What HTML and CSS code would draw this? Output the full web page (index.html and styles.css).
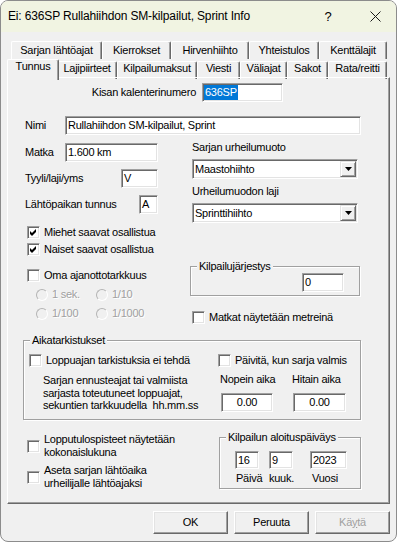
FILE: index.html
```html
<!DOCTYPE html>
<html>
<head>
<meta charset="utf-8">
<link rel="stylesheet" href="styles.css">
</head>
<body>
<div class="window">
  <div class="titlebar">
    <span class="title">Ei: 636SP Rullahiihdon SM-kilpailut, Sprint Info</span>
    <span class="help">?</span>
    <span class="close"><svg width="11" height="11" viewBox="0 0 11 11"><path d="M0.5 0.5L10.5 10.5M10.5 0.5L0.5 10.5" stroke="#1a1a1a" stroke-width="1"/></svg></span>
  </div>
  <div class="client">
    <div class="tabs">
      <div class="tabrow row1">
        <div class="tab">Sarjan lähtöajat</div>
        <div class="tab">Kierrokset</div>
        <div class="tab">Hirvenhiihto</div>
        <div class="tab">Yhteistulos</div>
        <div class="tab">Kenttälajit</div>
      </div>
      <div class="tabrow row2">
        <div class="tab sel">Tunnus</div>
        <div class="tab">Lajipiirteet</div>
        <div class="tab">Kilpailumaksut</div>
        <div class="tab">Viesti</div>
        <div class="tab">Väliajat</div>
        <div class="tab">Sakot</div>
        <div class="tab">Rata/reitti</div>
      </div>
    </div>

    <div class="panel">
      <div class="kisa">
        <span class="lbl">Kisan kalenterinumero</span>
        <span class="edit w81 hlbox"><span class="hl">636SP</span></span>
      </div>

      <div class="nimi">
        <span class="lbl">Nimi</span>
        <span class="edit w296">Rullahiihdon SM-kilpailut, Sprint</span>
      </div>

      <div class="mid">
        <div class="lcol">
          <div class="frow r-matka"><span>Matka</span><span class="edit w93">1.600 km</span></div>
          <div class="frow r-tyyli"><span>Tyyli/laji/yms</span><span class="edit w37">V</span></div>
          <div class="frow r-lahto"><span>Lähtöpaikan tunnus</span><span class="edit w19">A</span></div>
        </div>
        <div class="rcol">
          <div class="clabel c1">Sarjan urheilumuoto</div>
          <div class="combo"><span class="ctext">Maastohiihto</span><span class="dd"><svg width="7" height="4" viewBox="0 0 7 4"><path d="M0 0H7L3.5 4Z" fill="#000"/></svg></span></div>
          <div class="clabel c2">Urheilumuodon laji</div>
          <div class="combo"><span class="ctext">Sprinttihiihto</span><span class="dd"><svg width="7" height="4" viewBox="0 0 7 4"><path d="M0 0H7L3.5 4Z" fill="#000"/></svg></span></div>
        </div>
      </div>

      <div class="opts">
        <div class="lcol2">
          <div class="chk r-miehet"><span class="cb"><svg width="11" height="11" viewBox="0 0 11 11"><path d="M2 4L4 6L8 2V5L4 9L2 7Z" fill="#000"/></svg></span>Miehet saavat osallistua</div>
          <div class="chk r-naiset"><span class="cb"><svg width="11" height="11" viewBox="0 0 11 11"><path d="M2 4L4 6L8 2V5L4 9L2 7Z" fill="#000"/></svg></span>Naiset saavat osallistua</div>
          <div class="chk r-oma"><span class="cb"></span>Oma ajanottotarkkuus</div>
          <div class="radios">
            <span class="rad"><span class="rb"></span>1 sek.</span>
            <span class="rad"><span class="rb"></span>1/10</span>
            <span class="rad"><span class="rb"></span>1/100</span>
            <span class="rad"><span class="rb"></span>1/1000</span>
          </div>
        </div>
        <div class="rcol2">
          <div class="group g-jarj">
            <span class="gtitle">Kilpailujärjestys</span>
            <span class="edit w42">0</span>
          </div>
          <div class="chk r-matkat"><span class="cb"></span>Matkat näytetään metreinä</div>
        </div>
      </div>

      <div class="group g-aika">
        <span class="gtitle">Aikatarkistukset</span>
        <div class="aika-l">
          <div class="chk"><span class="cb"></span>Loppuajan tarkistuksia ei tehdä</div>
          <p class="note">Sarjan ennusteajat tai valmiista<br>sarjasta toteutuneet loppuajat,<br>sekuntien tarkkuudella&nbsp; hh.mm.ss</p>
        </div>
        <div class="aika-r">
          <div class="chk"><span class="cb"></span>Päivitä, kun sarja valmis</div>
          <div class="times">
            <div class="tcol t1"><span>Nopein aika</span><span class="edit center w52">0.00</span></div>
            <div class="tcol t2"><span>Hitain aika</span><span class="edit center w53">0.00</span></div>
          </div>
        </div>
      </div>

      <div class="bottom">
        <div class="bl">
          <div class="chk two b1"><span class="cb"></span><span>Lopputulospisteet näytetään<br>kokonaislukuna</span></div>
          <div class="chk two b2"><span class="cb"></span><span>Aseta sarjan lähtöaika<br>urheilijalle lähtöajaksi</span></div>
        </div>
        <div class="group g-date">
          <span class="gtitle">Kilpailun aloituspäiväys</span>
          <div class="dates">
            <div class="dcol d1"><span class="edit w24 sm">16</span><span class="dl">Päivä</span></div>
            <div class="dcol d2"><span class="edit w24 sm">9</span><span class="dl">kuuk.</span></div>
            <div class="dcol d3"><span class="edit w37 sm">2023</span><span class="dl">Vuosi</span></div>
          </div>
        </div>
      </div>
    </div>

    <div class="buttons">
      <span class="btn def">OK</span>
      <span class="btn">Peruuta</span>
      <span class="btn dis">Kä<u>y</u>tä</span>
    </div>
  </div>
</div>
</body>
</html>
```
FILE: styles.css
```css
* { box-sizing: border-box; }
html, body { margin: 0; background: #fff; }
body {
  font-family: "Liberation Sans", Arial, sans-serif;
  font-size: 11px;
  line-height: 13px;
  letter-spacing: -0.25px;
  color: #000;
}
.window {
  width: 397px;
  height: 542px;
  border: 1px solid #8c8c8c;
  border-radius: 8px;
  background: #f0f0f0;
  overflow: hidden;
  display: flex;
  flex-direction: column;
}
.titlebar {
  height: 31px;
  flex: none;
  background: #f1f4e2;
  display: flex;
  align-items: center;
  padding-left: 7px;
}
.title { flex: 1; font-size: 12px; letter-spacing: -0.15px; color: #000; }
.help { width: 20px; text-align: center; font-size: 13px; margin-right: 27px; }
.close { width: 20px; display: flex; justify-content: center; margin-right: 11px; }

.client { flex: 1; padding: 9px 6px 0 6px; display: flex; flex-direction: column; }

.tabs { height: 36px; flex: none; }
.tabrow { display: grid; height: 18px; }
.row1 { grid-template-columns: 91px 69px 78px 70px 68px; margin-left: 4px; }
.row2 { grid-template-columns: 48px 60px 80px 43px 47px 41px 59px; margin-left: 2px; align-items: end; }
.tab {
  height: 18px;
  border-top: 1px solid #fff;
  border-left: 1px solid #fff;
  border-right: 1px solid #696969;
  box-shadow: inset -1px 0 0 #a0a0a0;
  border-radius: 2px 2px 0 0;
  text-align: center;
  white-space: nowrap;
}
.row1 .tab { padding-top: 2px; }
.row2 .tab { padding-top: 0; }
.tab.sel {
  height: 21px;
  margin: 0 -2px -1px -2px;
  background: #f0f0f0;
  z-index: 1;
}

.panel {
  height: 427px;
  flex: none;
  border: 1px solid;
  border-color: #fff #696969 #696969 #fff;
  box-shadow: inset -1px -1px 0 #a0a0a0;
}

.edit {
  display: flex;
  align-items: center;
  height: 19px;
  background: #fff;
  border: 1px solid;
  border-color: #a0a0a0 #fff #fff #a0a0a0;
  box-shadow: inset 1px 1px 0 #696969, inset -1px -1px 0 #e3e3e3;
  padding-left: 2px;
  white-space: nowrap;
  overflow: hidden;
  flex: none;
}
.edit.center { justify-content: center; padding-left: 0; }
.edit.sm { height: 18px; }
.w19 { width: 19px; } .w24 { width: 24px; } .w37 { width: 37px; } .w42 { width: 42px; }
.w52 { width: 52px; } .w53 { width: 53px; } .w81 { width: 81px; } .w93 { width: 93px; }
.w296 { width: 296px; }
.hlbox { padding-left: 1px; }
.hl { background: #0078d7; color: #fff; line-height: 15px; padding: 0 1px; }

.kisa { display: flex; align-items: center; gap: 6px; margin: 5px 0 0 80px; }
.kisa .lbl { width: 108px; text-align: right; }
.nimi { display: flex; align-items: center; margin: 14px 0 0 17px; }
.nimi .lbl { width: 40px; }

.mid { display: grid; grid-template-columns: 133px 166px; column-gap: 34px; margin-left: 17px; align-items: start; }
.frow { display: flex; align-items: center; justify-content: space-between; }
.r-matka { margin-top: 8px; }
.r-tyyli { margin-top: 7px; }
.r-lahto { margin-top: 7px; }
.clabel.c1 { margin-top: 6px; }
.clabel.c2 { margin-top: 6px; }
.combo {
  margin-top: 5px;
  height: 20px;
  display: flex;
  align-items: center;
  background: #fff;
  border: 1px solid;
  border-color: #a0a0a0 #fff #fff #a0a0a0;
  box-shadow: inset 1px 1px 0 #696969, inset -1px -1px 0 #e3e3e3;
  padding: 1px 1px 1px 2px;
}
.ctext { flex: 1; }
.dd {
  width: 16px;
  height: 16px;
  display: flex;
  align-items: center;
  justify-content: center;
  background: #f0f0f0;
  border: 1px solid;
  border-color: #e3e3e3 #696969 #696969 #e3e3e3;
  box-shadow: inset 1px 1px 0 #fff, inset -1px -1px 0 #a0a0a0;
}

.opts { display: grid; grid-template-columns: 165px 170px; margin-left: 17px; align-items: start; }
.chk { display: flex; align-items: center; height: 13px; gap: 4px; white-space: nowrap; }
.lcol2 .chk { padding-left: 2px; }
.cb {
  width: 13px;
  height: 13px;
  flex: none;
  background: #fff;
  border: 1px solid;
  border-color: #a0a0a0 #fff #fff #a0a0a0;
  box-shadow: inset 1px 1px 0 #696969, inset -1px -1px 0 #e3e3e3;
  display: flex;
}
.r-miehet { margin-top: 3px; }
.r-naiset { margin-top: 4px; }
.r-oma { margin-top: 13px; }
.radios { display: grid; grid-template-columns: 60px auto; row-gap: 6px; margin: 6px 0 0 11px; }
.rad { display: flex; align-items: center; gap: 4px; height: 13px; color: #a0a0a0; text-shadow: 1px 1px 0 #fff; }
.rb {
  width: 12px;
  height: 12px;
  border-radius: 50%;
  border: 1px solid;
  border-color: #b4b4b4 #fff #fff #b4b4b4;
  background: #f0f0f0;
  flex: none;
}

.group {
  position: relative;
  border: 1px solid #a0a0a0;
  box-shadow: inset 1px 1px 0 #fff, 1px 1px 0 #fff;
}
.gtitle {
  position: absolute;
  top: -7px;
  left: 6px;
  padding: 0 2px;
  background: #f0f0f0;
  white-space: nowrap;
}
.g-jarj { margin-top: 43px; display: flex; justify-content: flex-end; padding: 6px 15px 3px 0; }
.r-matkat { margin-top: 15px; padding-left: 2px; }

.g-aika {
  margin: 16px 0 0 15px;
  width: 338px;
  height: 80px;
  display: grid;
  grid-template-columns: 194px 1fr;
  padding-top: 13px;
}
.aika-l { padding-left: 5px; }
.note { margin: 7px 0 0 14px; line-height: 12.5px; white-space: nowrap; }
.times { display: flex; margin-top: 6px; }
.tcol { display: flex; flex-direction: column; }
.tcol .edit { margin-top: 7px; margin-left: 1px; }
.t1 { margin-left: 2px; width: 72px; }

.bottom { display: grid; grid-template-columns: 194px 142px; margin-left: 17px; align-items: start; }
.chk.two { height: 26px; padding-left: 2px; }
.b1 { margin-top: 13px; }
.b2 { margin-top: 5px; }
.g-date { margin-top: 17px; height: 52px; padding: 13px 0 0 15px; }
.dates { display: flex; }
.dcol { display: flex; flex-direction: column; }
.d1 { width: 34px; }
.d2 { width: 41px; }
.dl { margin-top: 3px; }
.d1 .dl { margin-left: 1px; }
.d3 .dl { margin-left: 2px; }

.buttons { display: flex; justify-content: flex-end; gap: 6px; margin-top: 7px; }
.btn {
  width: 75px;
  height: 23px;
  display: flex;
  align-items: center;
  justify-content: center;
  background: #f0f0f0;
  border: 1px solid;
  border-color: #fff #696969 #696969 #fff;
  box-shadow: inset -1px -1px 0 #a0a0a0, inset 1px 1px 0 #e3e3e3;
}
.btn.dis { color: #a0a0a0; }
.btn.dis u { text-decoration: underline; }
```
